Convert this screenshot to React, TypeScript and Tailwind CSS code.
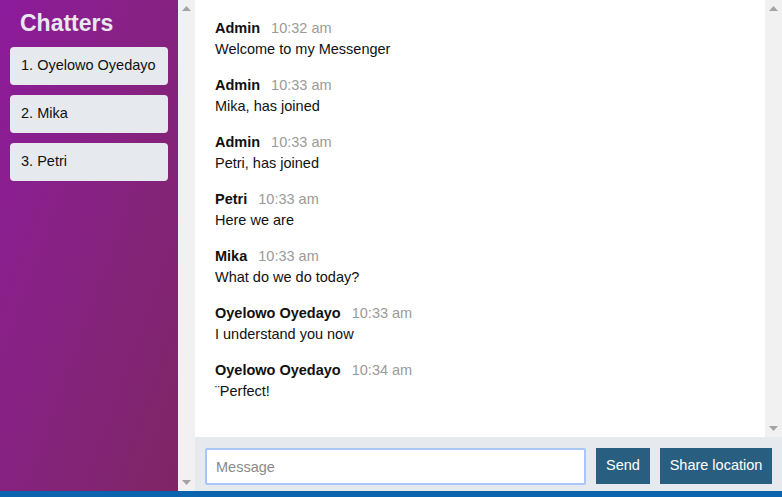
import React from 'react';

const chatters = ['Oyelowo Oyedayo', 'Mika', 'Petri'];

const messages = [
  { name: 'Admin', time: '10:32 am', text: 'Welcome to my Messenger' },
  { name: 'Admin', time: '10:33 am', text: 'Mika, has joined' },
  { name: 'Admin', time: '10:33 am', text: 'Petri, has joined' },
  { name: 'Petri', time: '10:33 am', text: 'Here we are' },
  { name: 'Mika', time: '10:33 am', text: 'What do we do today?' },
  { name: 'Oyelowo Oyedayo', time: '10:33 am', text: 'I understand you now' },
  { name: 'Oyelowo Oyedayo', time: '10:34 am', text: '¨Perfect!' },
];

const Arrow = ({ down }: { down?: boolean }) => (
  <svg width="9" height="5" viewBox="0 0 9 5" className="block">
    {down ? <polygon points="0,0 9,0 4.5,5" fill="#a3a3a3" /> : <polygon points="0,5 9,5 4.5,0" fill="#a3a3a3" />}
  </svg>
);

// fake scrollbar track, just the arrows like the screenshot shows
const Scrollbar = ({ className }: { className?: string }) => (
  <div className={`w-[17px] shrink-0 bg-[#f1f1f1] flex flex-col items-center justify-between py-[6px] ${className ?? ''}`}>
    <Arrow />
    <Arrow down />
  </div>
);

const Sidebar = () => (
  <div className="flex h-full">
    <div className="w-[178px] h-full bg-linear-to-br from-[#8d1a9b] to-[#7f2565] px-[10px] pt-[8px]">
      <h2 className="text-[23px] font-bold text-[#e8e9ee] pl-[10px] leading-[30px] mb-[9px]">Chatters</h2>
      <ul className="flex flex-col gap-[10px]">
        {chatters.map((c, i) => (
          <li key={c} className="bg-[#e6e9ed] rounded-[4px] h-[38px] flex items-center px-[11px] text-[14.5px] text-[#111]">
            {i + 1}. {c}
          </li>
        ))}
      </ul>
    </div>
    <Scrollbar />
  </div>
);

const App = () => {
  return (
    <div className="w-[782px] h-[497px] flex flex-col overflow-hidden font-['Liberation_Sans',Arial,sans-serif]">
      <div className="flex flex-1 min-h-0">
        <Sidebar />
        <div className="flex-1 flex flex-col min-w-0">
          <div className="flex flex-1 min-h-0 bg-white">
            <div className="flex-1 pl-[20px] pt-[18px]">
              {messages.map((m, i) => (
                <div key={i} className="mb-[15px] text-[14.5px] leading-[21px]">
                  <p>
                    <span className="font-bold text-[#111]">{m.name}</span>
                    <span className="text-[#9a9a9a] ml-[11px]">{m.time}</span>
                  </p>
                  <p className="text-[#111]">{m.text}</p>
                </div>
              ))}
            </div>
            <Scrollbar />
          </div>
          <div className="h-[54px] bg-[#e6e9ed] flex items-start gap-[10px] px-[10px] pt-[11px]">
            <input
              placeholder="Message"
              className="w-[381px] h-[37px] bg-white border-2 border-[#a8c6f6] rounded-[2px] px-[9px] text-[14.5px] outline-none placeholder:text-[#8a8a8a]"
            />
            <button className="w-[54px] h-[36px] bg-[#285f80] text-white text-[14.5px]">Send</button>
            <button className="w-[112px] h-[36px] bg-[#285f80] text-white text-[14.5px]">Share location</button>
          </div>
        </div>
      </div>
      <div className="h-[6px] bg-[#0c64ae]" />
    </div>
  );
};

export default App;
